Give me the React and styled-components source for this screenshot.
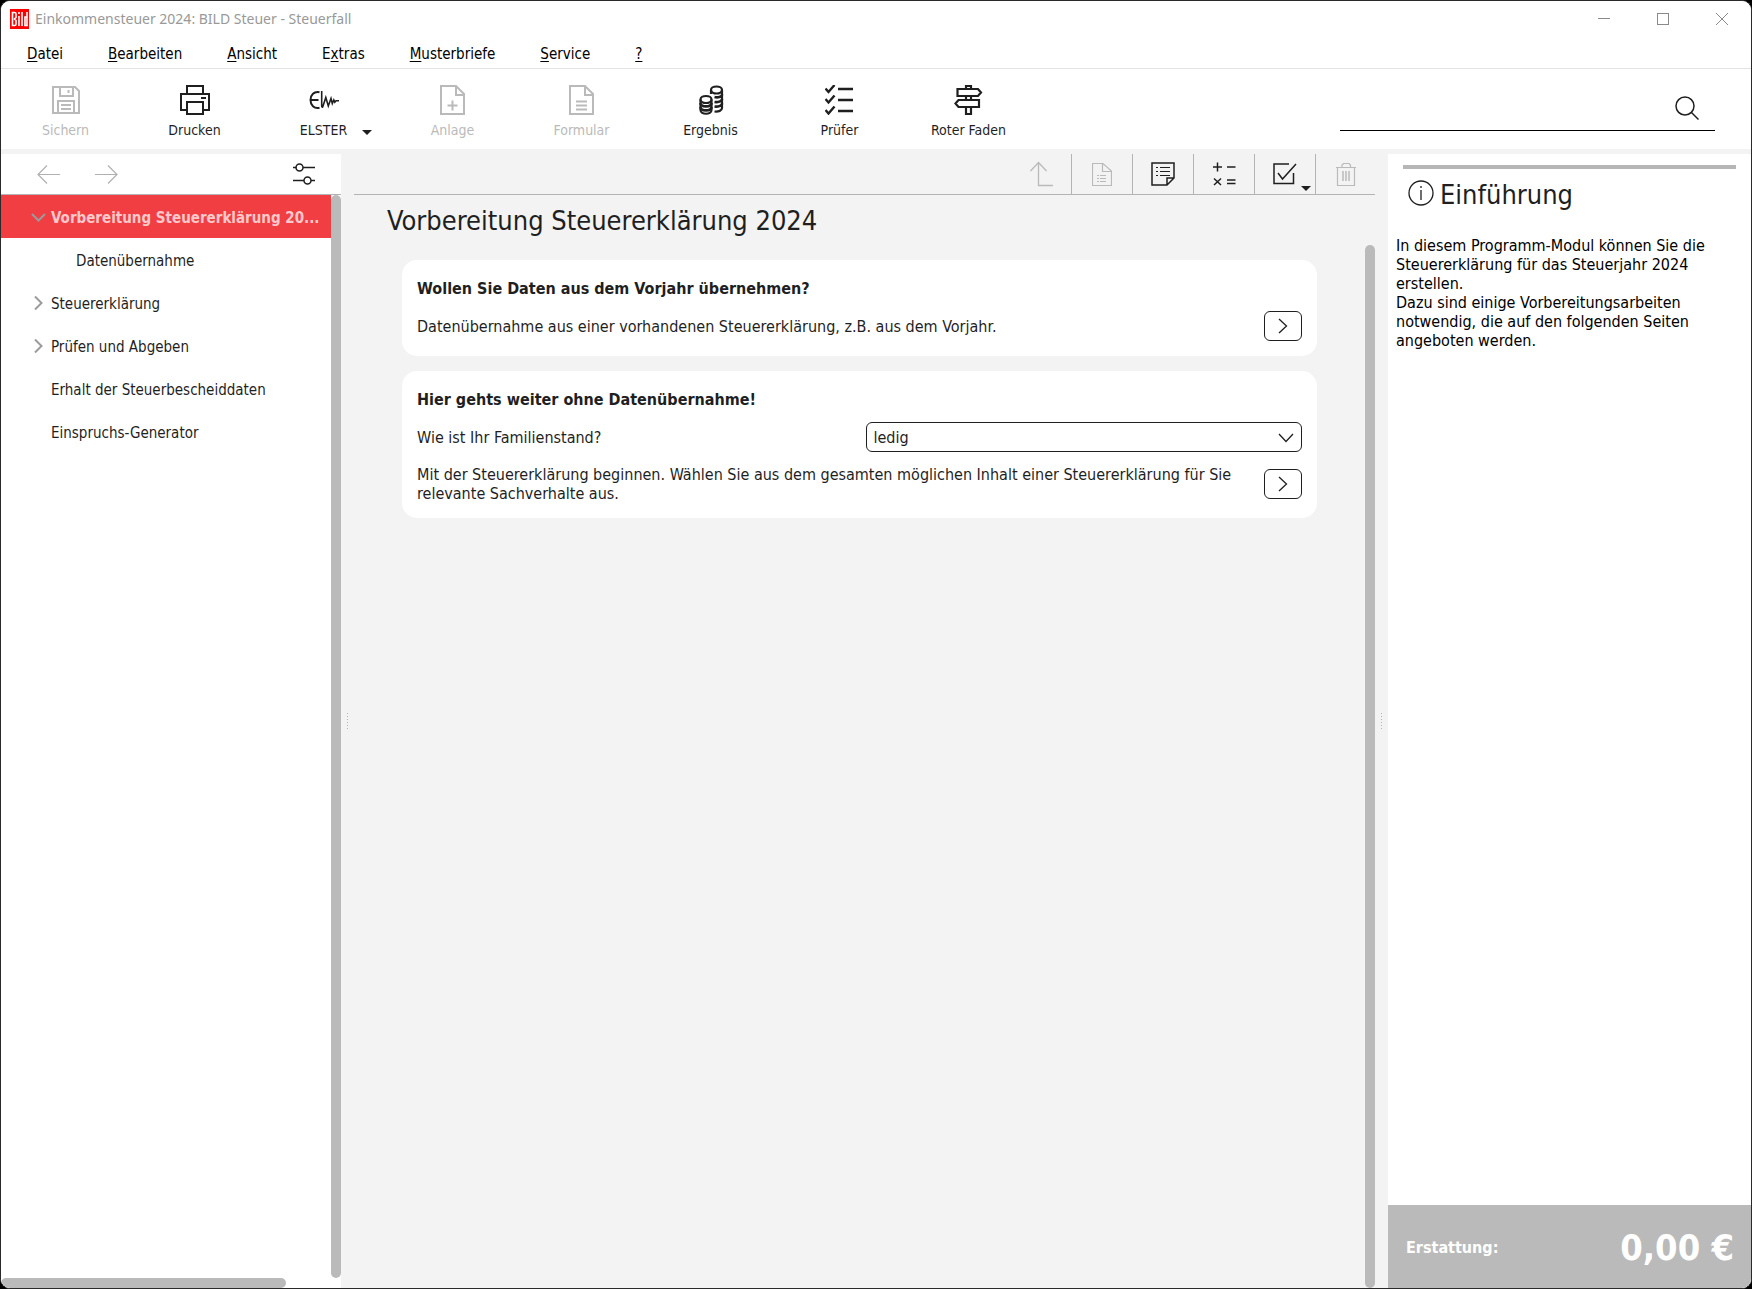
import React from 'react'
import styled, { createGlobalStyle } from 'styled-components'

const GlobalStyle = createGlobalStyle`
    * {
        box-sizing: border-box;
    }
    body {
        margin: 0;
        background: #000;
        color: #1f1f1f;
        font: 16px/19px "DejaVu Sans Condensed", "Noto Sans", sans-serif;
    }
    button, input, select {
        font: inherit;
        color: inherit;
    }
    button {
        padding: 0;
        border: 0;
        background: none;
    }
    svg {
        display: block;
        flex-shrink: 0;
    }
`

const Window = styled.div`
    display: flex;
    flex-direction: column;
    min-height: 100vh;
    border: 1px solid #2b2a2b;
    border-radius: 10px;
    background: #f3f3f3;
    overflow: hidden;
`
const TitleBar = styled.header`
    display: flex;
    align-items: center;
    height: 36px;
    padding-left: 9px;
    background: #fff;
`
const WindowTitle = styled.h1`
    flex: 1;
    margin: 0 0 0 6px;
    color: #999;
    font: 400 14px/20px "Noto Sans", sans-serif;
`
const WindowButton = styled.button`
    display: flex;
    justify-content: center;
    width: 59px;
    color: #8a8a8a;
`
const MenuBar = styled.nav`
    display: flex;
    gap: 45px;
    height: 32px;
    padding: 8px 26px 4px;
    border-bottom: 1px solid #e3e3e3;
    background: #fff;
    color: #000;
    font-size: 15px;
`
const MenuItem = styled.button`
    white-space: nowrap;
    text-underline-offset: 2px;
`
const Toolbar = styled.div`
    display: flex;
    height: 80px;
    margin-bottom: 5px;
    padding-right: 36px;
    background: #fff;
`
const ToolGroup = styled.div`
    display: flex;
    flex: 1;
`
const Tool = styled.button`
    position: relative;
    display: flex;
    flex-direction: column;
    align-items: center;
    gap: 6px;
    width: 129px;
    padding-top: 16px;
    font-size: 14px;
    line-height: 18px;
    color: ${props => props.disabled ? '#bababa' : '#1f1f1f'};
`
const Caret = styled.span`
    position: absolute;
    right: ${props => props.$right};
    bottom: ${props => props.$bottom};
    border: 5px solid transparent;
    border-top-color: #1f1f1f;
    border-bottom: 0;
`
const Search = styled.label`
    display: flex;
    align-items: center;
    width: 375px;
    height: 40px;
    margin-top: 22px;
    padding: 0 16px 6px 0;
    border-bottom: 1px solid #000;
`
const SearchInput = styled.input`
    flex: 1;
    min-width: 0;
    border: 0;
    outline: 0;
    background: none;
`
const Body = styled.div`
    display: grid;
    grid-template-columns: 340px 13px minmax(0, 1fr) 13px 363px;
    flex: 1;
`
const Sidebar = styled.aside`
    display: flex;
    flex-direction: column;
    background: #fff;
`
const SidebarHead = styled.div`
    display: flex;
    align-items: center;
    gap: 35px;
    height: 41px;
    padding: 0 26px 0 36px;
    border-bottom: 1px solid #b4b4b4;
    color: #b0b0b0;
`
const SettingsButton = styled.button`
    margin-left: auto;
    color: #1f1f1f;
`
const TreeArea = styled.div`
    display: grid;
    grid-template-columns: minmax(0, 1fr) 10px;
    grid-template-rows: 1fr 10px;
    flex: 1;
`
const Tree = styled.ul`
    margin: 0;
    padding: 0;
    list-style: none;
    font-size: 15px;
`
const TreeItem = styled.li`
    display: flex;
    align-items: center;
    height: 43px;
    padding-left: ${props => props.$nested ? '55px' : '30px'};
    background: ${props => props.$active ? '#f03e43' : 'none'};
    color: ${props => props.$active ? '#fcc8ca' : 'inherit'};
    font-weight: ${props => props.$active ? 700 : 400};
`
const TreeToggle = styled.span`
    width: 20px;
    color: #9b9b9b;
`
const TreeLabel = styled.a`
    padding-top: 3px;
    color: inherit;
    text-decoration: none;
    white-space: nowrap;
`
const ScrollThumb = styled.div`
    width: ${props => props.$width || '10px'};
    border-radius: 5px;
    background: #bababa;
`
const Splitter = styled.div`
    display: flex;
    align-items: center;
    justify-content: center;
`
const Grip = styled.span`
    width: 1px;
    height: 16px;
    background: repeating-linear-gradient(#b4b4b4 0 1px, transparent 1px 3px);
`
const Main = styled.main`
    display: flex;
    flex-direction: column;
`
const PageTools = styled.div`
    display: flex;
    justify-content: flex-end;
    height: 41px;
    border-bottom: 1px solid #b4b4b4;
`
const PageTool = styled.button`
    position: relative;
    display: flex;
    align-items: center;
    justify-content: center;
    width: 61px;
    color: ${props => props.disabled ? '#bababa' : '#1f1f1f'};

    & + & {
        border-left: 1px solid #b4b4b4;
    }
    &:last-child {
        width: 60px;
    }
`
const PageTitle = styled.h2`
    margin: 9px 0 7px 33px;
    font-size: 27px;
    font-weight: 400;
    line-height: 34px;
`
const Content = styled.div`
    display: flex;
    flex: 1;
    gap: 48px;
`
const Cards = styled.div`
    display: flex;
    flex: 1;
    flex-direction: column;
    gap: 15px;
    padding: 15px 0 15px 48px;
`
const Card = styled.section`
    display: flex;
    flex-direction: column;
    gap: 13px;
    padding: 19px 15px 15px;
    border-radius: 15px;
    background: #fff;
`
const CardTitle = styled.h3`
    margin: 0;
    font-size: 16px;
    line-height: 19px;
`
const CardRow = styled.div`
    display: flex;
    align-items: center;
    justify-content: space-between;
    min-height: 30px;
`
const CardText = styled.p`
    max-width: 820px;
    margin: 0;
`
const GoButton = styled.button`
    display: flex;
    align-items: center;
    justify-content: center;
    width: 38px;
    height: 30px;
    border: 1px solid #1f1f1f;
    border-radius: 6px;
`
const SelectBox = styled.span`
    position: relative;
    display: flex;
    width: calc(50% - 6px);
    height: 30px;

    svg {
        position: absolute;
        top: 11px;
        right: 8px;
        pointer-events: none;
    }
`
const Select = styled.select`
    flex: 1;
    padding: 1px 7px 0;
    appearance: none;
    border: 1px solid #1f1f1f;
    border-radius: 6px;
    background: #fff;
`
const Info = styled.aside`
    display: flex;
    flex-direction: column;
    background: #fff;
    color: #000;
`
const InfoBar = styled.div`
    height: 4px;
    margin: 11px 15px;
    background: #b6b6b6;
`
const InfoTitle = styled.h2`
    display: flex;
    gap: 6px;
    margin: 0;
    padding-left: 20px;
    color: #1f1f1f;
    font-size: 27px;
    font-weight: 400;
    line-height: 30px;
`
const InfoText = styled.p`
    margin: 26px 40px 0 8px;
`
const Refund = styled.footer`
    display: flex;
    align-items: center;
    justify-content: space-between;
    height: 83px;
    margin-top: auto;
    padding: 2px 17px 0 18px;
    background: #bababa;
    color: #fff;
    font-weight: 700;
`
const RefundAmount = styled.output`
    font-size: 36px;
    line-height: 44px;
`

function Icon({ w = 30, h = 30, sw = 2, children }) {
    return (
        <svg width={w} height={h} viewBox={`0 0 ${w} ${h}`} fill="none" stroke="currentColor" strokeWidth={sw} aria-hidden="true">
            {children}
        </svg>
    )
}

const saveIcon = (
    <Icon>
        <path d="M2 2H24L28 6V28H2Z M9 2V11H22V2 M7 28V16H23V28" />
        <path d="M17.5 5V8 M10 20H20 M10 24H20" />
    </Icon>
)
const printIcon = (
    <Icon>
        <path d="M7 9V1H23V9 M7 25H1V9H29V25H23" />
        <path d="M7 17H23V29H7Z M21 13H26" />
    </Icon>
)
const elsterIcon = (
    <Icon>
        <path d="M10.5 7.2C5 6 1.5 10 1.5 15C1.5 20 5 24 10.5 22.8 M2 15H9.5" />
        <path d="M12.7 6V20.5Q12.7 22.5 13.7 22L16.8 12.5L19.3 21L22 13.5L23.3 18.5L24.8 15L25.8 17.2L27 15.8H30" strokeWidth="1.6" />
    </Icon>
)
const attachIcon = (
    <Icon>
        <path d="M3 1H18L26 9V29H3Z M18 1V10H26 M14.5 15.5V25.5 M9.5 20.5H19.5" />
    </Icon>
)
const formIcon = (
    <Icon>
        <path d="M3 1H18L26 9V29H3Z M18 1V10H26 M9 16.5H20 M9 20.5H20 M9 24.5H20" />
    </Icon>
)
const coinsIcon = (
    <Icon sw={2.2}>
        <ellipse cx="20.5" cy="5" rx="5.5" ry="3.5" />
        <path d="M15 5V9 M26 5V23C26 25.5 22.5 27 18.5 26.5" />
        <path d="M26 9.5C26 12 21.5 13 18.5 12 M26 14C26 16.5 21.5 17.5 18.5 17 M26 18.5C26 21 21.5 22 18.5 21.5" strokeWidth="2.6" />
        <ellipse cx="10" cy="14.5" rx="5.5" ry="3.5" />
        <path d="M4.5 14.5V25C4.5 30 15.5 30 15.5 25V14.5" />
        <path d="M4.5 18C4.5 22.5 15.5 22.5 15.5 18 M4.5 22C4.5 26.5 15.5 26.5 15.5 22" strokeWidth="2.6" />
    </Icon>
)
const checksIcon = (
    <Icon>
        <path d="M.5 3.5L3.5 7L9.5 0 M.5 14L3.5 17.5L9.5 10.5 M.5 25L3.5 28.5L9.5 21.5" strokeWidth="2.4" />
        <path d="M13 4H28 M13 15H28 M13 26H28" strokeWidth="2.4" />
    </Icon>
)
const signIcon = (
    <Icon>
        <path d="M3.5 4H24L27 7.5L24 11H3.5Z M25 15H4.5L1.5 18.5L4.5 22H25Z M12 4V1H17V4 M12 11V15 M17 11V15 M12 22V29H17V22" strokeWidth="2.2" />
    </Icon>
)

const tools = [
    { label: 'Sichern', icon: saveIcon, disabled: true },
    { label: 'Drucken', icon: printIcon },
    { label: 'ELSTER', icon: elsterIcon, caret: true },
    { label: 'Anlage', icon: attachIcon, disabled: true },
    { label: 'Formular', icon: formIcon, disabled: true },
    { label: 'Ergebnis', icon: coinsIcon },
    { label: 'Prüfer', icon: checksIcon },
    { label: 'Roter Faden', icon: signIcon },
]

// [before, access key, after]
const menu = [
    ['', 'D', 'atei'],
    ['', 'B', 'earbeiten'],
    ['', 'A', 'nsicht'],
    ['E', 'x', 'tras'],
    ['', 'M', 'usterbriefe'],
    ['', 'S', 'ervice'],
    ['', '?', ''],
]

const pageTools = [
    {
        label: 'Ebene nach oben',
        disabled: true,
        icon: <Icon w={24} h={26} sw={1.3}><path d="M9.5 2V24.5H24 M1.5 10L9.5 1.5L17.5 10" /></Icon>,
    },
    {
        label: 'Formularansicht',
        disabled: true,
        icon: <Icon w={20} h={24} sw={1.2}><path d="M.5 1.5H11L19.5 9V23.5H.5Z M10.5 1.5V9.5H19.5 M5 13.5H7 M8 13.5H14 M5 16.5H7 M8 16.5H14 M5 19.5H7 M8 19.5H14" /></Icon>,
    },
    {
        label: 'Notizen',
        icon: <Icon w={24} h={24} sw={1}><path d="M1 1H23V16L16 23H1Z M16 23V16H23" strokeWidth="1.5" /><path d="M5 5.5H7 M9 5.5H19 M5 9.5H7 M9 9.5H19 M5 13.5H7 M9 13.5H19" /></Icon>,
    },
    {
        label: 'Rechner',
        icon: <Icon w={24} h={24} sw={1.5}><path d="M1 5H10 M5.5 .5V9.5 M15 5H23.5 M2 16.5L9 23 M9 16.5L2 23 M15 18H23.5 M15 21.5H23.5" /></Icon>,
    },
    {
        label: 'Erledigt',
        caret: true,
        icon: <Icon w={24} h={24} sw={1.5}><path d="M16 2H1V21.5H20.5V11 M5 11L9.5 17L23 2" /></Icon>,
    },
    {
        label: 'Löschen',
        disabled: true,
        icon: <Icon w={20} h={24} sw={1.2}><path d="M0 5.5H20 M1.5 5.5V23.5H18.5V5.5 M6 5V3L7.5 1.5H13L14.5 3V5" /><path d="M7 9V19 M10 9V19 M13 9V19" strokeWidth="1.5" /></Icon>,
    },
]

const tree = [
    { label: 'Vorbereitung Steuererklärung 20...', open: true, active: true },
    { label: 'Datenübernahme', nested: true },
    { label: 'Steuererklärung', closed: true },
    { label: 'Prüfen und Abgeben', closed: true },
    { label: 'Erhalt der Steuerbescheiddaten' },
    { label: 'Einspruchs-Generator' },
]

function renderToggle({ open, closed }) {
    if (open) return <Icon w={15} h={14} sw={2}><path d="M1 4L7.5 10.5L14 4" /></Icon>
    if (closed) return <Icon w={15} h={14} sw={2}><path d="M4 0.5L10.5 7L4 13.5" /></Icon>
    return null
}

function BildLogo() {
    return (
        <svg width="19" height="20" viewBox="0 0 19 20" role="img" aria-label="Bild">
            <rect width="19" height="20" fill="#f00" />
            <g fill="none" stroke="#fff" strokeWidth="1.6">
                <path d="M2.5 3.5V16.5H4.5Q6 16.5 6 15V11.5L4.5 10L6 8.5V5Q6 3.5 4.5 3.5Z" />
                <path d="M9 7V17 M9 3V5 M12 3V17 M17 3V16.5H15V8H17" />
            </g>
        </svg>
    )
}

function GoArrow() {
    return <Icon w={10} h={16} sw={1.3}><path d="M1 1L8.5 8L1 15" /></Icon>
}

export default function App() {
    return (
        <>
            <GlobalStyle />
            <Window>
                <TitleBar>
                    <BildLogo />
                    <WindowTitle>Einkommensteuer 2024: BILD Steuer - Steuerfall</WindowTitle>
                    <WindowButton aria-label="Minimieren">
                        <Icon w={12} h={12} sw={1}><path d="M0 5.5H12" /></Icon>
                    </WindowButton>
                    <WindowButton aria-label="Maximieren">
                        <Icon w={12} h={12} sw={1}><rect x=".5" y=".5" width="11" height="11" /></Icon>
                    </WindowButton>
                    <WindowButton aria-label="Schließen">
                        <Icon w={12} h={12} sw={1}><path d="M0 0L12 12 M12 0L0 12" /></Icon>
                    </WindowButton>
                </TitleBar>
                <MenuBar>
                    {menu.map(([before, key, after]) => (
                        <MenuItem key={key}>{before}<u>{key}</u>{after}</MenuItem>
                    ))}
                </MenuBar>
                <Toolbar>
                    <ToolGroup>
                        {tools.map(({ label, icon, disabled, caret }) => (
                            <Tool key={label} disabled={disabled}>
                                {icon}
                                {label}
                                {caret && <Caret $right="16px" $bottom="14px" />}
                            </Tool>
                        ))}
                    </ToolGroup>
                    <Search>
                        <SearchInput type="text" aria-label="Suche" />
                        <Icon w={24} h={24} sw={1.5}><circle cx="10" cy="10" r="9" /><path d="M16 16L23.5 23.5" /></Icon>
                    </Search>
                </Toolbar>
                <Body>
                    <Sidebar>
                        <SidebarHead>
                            <button aria-label="Zurück">
                                <Icon w={23} h={20} sw={1.2}><path d="M23 10.5H1 M10 1.5L1 10.5L10 19.5" /></Icon>
                            </button>
                            <button aria-label="Vorwärts">
                                <Icon w={23} h={20} sw={1.2}><path d="M0 10.5H22 M13 1.5L22 10.5L13 19.5" /></Icon>
                            </button>
                            <SettingsButton aria-label="Einstellungen">
                                <Icon w={22} h={22} sw={1.5}>
                                    <path d="M0 4.5H3.5 M10 4.5H22 M0 17.5H11 M18 17.5H22" />
                                    <circle cx="6.5" cy="4.5" r="3.5" />
                                    <circle cx="14.5" cy="17.5" r="3.5" />
                                </Icon>
                            </SettingsButton>
                        </SidebarHead>
                        <TreeArea>
                            <Tree>
                                {tree.map(item => (
                                    <TreeItem key={item.label} $nested={item.nested} $active={item.active}>
                                        <TreeToggle>{renderToggle(item)}</TreeToggle>
                                        <TreeLabel href="#">{item.label}</TreeLabel>
                                    </TreeItem>
                                ))}
                            </Tree>
                            <ScrollThumb />
                            <ScrollThumb $width="285px" />
                        </TreeArea>
                    </Sidebar>
                    <Splitter><Grip /></Splitter>
                    <Main>
                        <PageTools>
                            {pageTools.map(({ label, icon, disabled, caret }) => (
                                <PageTool key={label} aria-label={label} disabled={disabled}>
                                    {icon}
                                    {caret && <Caret $right="4px" $bottom="3px" />}
                                </PageTool>
                            ))}
                        </PageTools>
                        <PageTitle>Vorbereitung Steuererklärung 2024</PageTitle>
                        <Content>
                            <Cards>
                                <Card>
                                    <CardTitle>Wollen Sie Daten aus dem Vorjahr übernehmen?</CardTitle>
                                    <CardRow>
                                        <CardText>Datenübernahme aus einer vorhandenen Steuererklärung, z.B. aus dem Vorjahr.</CardText>
                                        <GoButton aria-label="Datenübernahme starten"><GoArrow /></GoButton>
                                    </CardRow>
                                </Card>
                                <Card>
                                    <CardTitle>Hier gehts weiter ohne Datenübernahme!</CardTitle>
                                    <CardRow>
                                        <label htmlFor="familienstand">Wie ist Ihr Familienstand?</label>
                                        <SelectBox>
                                            <Select id="familienstand" defaultValue="ledig">
                                                <option>ledig</option>
                                                <option>verheiratet</option>
                                                <option>verwitwet</option>
                                                <option>geschieden</option>
                                            </Select>
                                            <Icon w={16} h={10} sw={1.3}><path d="M1 1L8 8.5L15 1" /></Icon>
                                        </SelectBox>
                                    </CardRow>
                                    <CardRow>
                                        <CardText>Mit der Steuererklärung beginnen. Wählen Sie aus dem gesamten möglichen Inhalt einer Steuererklärung für Sie relevante Sachverhalte aus.</CardText>
                                        <GoButton aria-label="Mit der Steuererklärung beginnen"><GoArrow /></GoButton>
                                    </CardRow>
                                </Card>
                            </Cards>
                            <ScrollThumb />
                        </Content>
                    </Main>
                    <Splitter><Grip /></Splitter>
                    <Info>
                        <InfoBar />
                        <InfoTitle>
                            <Icon w={26} h={26} sw={1.3}><circle cx="13" cy="13" r="12" /><path d="M13 10V20 M13 6V8" /></Icon>
                            Einführung
                        </InfoTitle>
                        <InfoText>
                            In diesem Programm-Modul können Sie die Steuererklärung für das Steuerjahr 2024 erstellen.<br />
                            Dazu sind einige Vorbereitungsarbeiten notwendig, die auf den folgenden Seiten angeboten werden.
                        </InfoText>
                        <Refund>
                            <span>Erstattung:</span>
                            <RefundAmount>0,00 €</RefundAmount>
                        </Refund>
                    </Info>
                </Body>
            </Window>
        </>
    )
}
